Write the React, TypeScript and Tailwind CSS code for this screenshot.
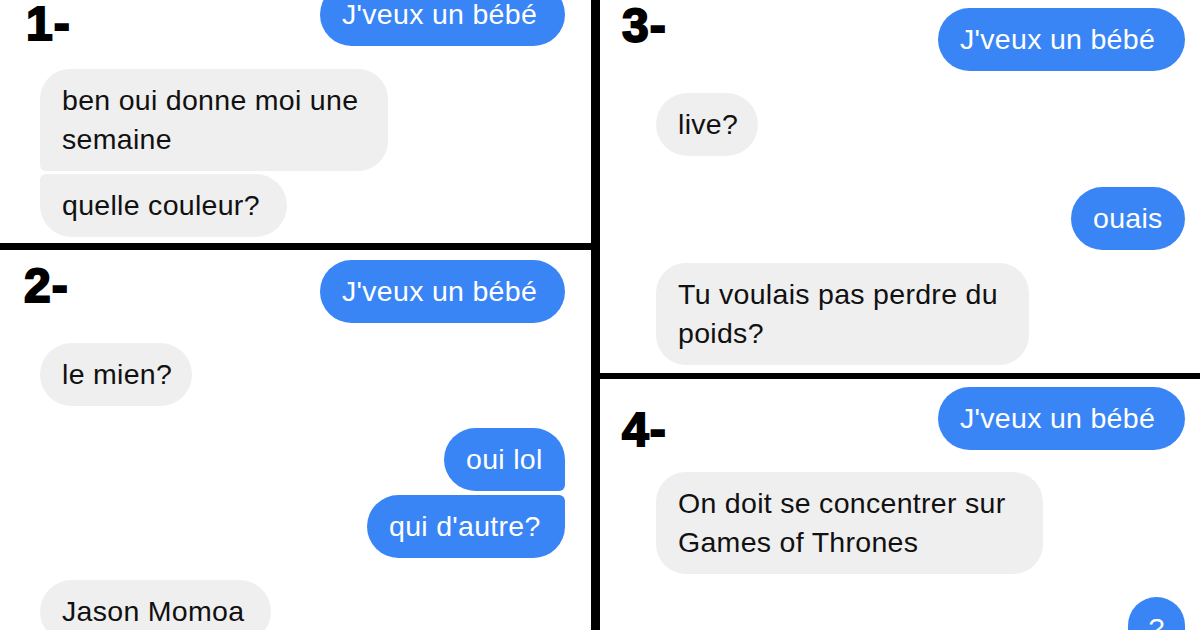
import type { ReactNode } from "react";

const font = { fontFamily: '"Liberation Sans", Arial, sans-serif' };

function Bubble({ children, className }: { children: ReactNode; className: string }) {
  return (
    <div
      className={`shrink-0 px-[22px] py-[12px] text-[28.5px] leading-[39px] tracking-[0.3px] whitespace-nowrap ${className}`}
    >
      {children}
    </div>
  );
}

function Label({ children, className }: { children: ReactNode; className: string }) {
  return (
    <div
      className={`text-[48px] font-bold leading-[36px] tracking-[1px] text-black [-webkit-text-stroke:2px_black] ${className}`}
    >
      {children}
    </div>
  );
}

// me = blue on the right, them = gray on the left
const me = "self-end bg-[#3a85f6] text-white";
const them = "self-start bg-[#efefef] text-[#111]";

export default function App() {
  return (
    <div className="flex h-[630px] w-[1200px] overflow-hidden bg-white" style={font}>
      {/* left column */}
      <div className="flex w-[591px] shrink-0 flex-col">
        {/* 1 */}
        <div className="flex h-[243px] shrink-0 flex-col overflow-hidden pl-[40px] pr-[26px]">
          <div className="flex items-start justify-between">
            <Label className="-ml-[14px] mt-[6px]">1-</Label>
            <Bubble className={`-mt-[17px] w-[245px] rounded-[32px] ${me}`}>J'veux un bébé</Bubble>
          </div>
          <Bubble className={`mt-[23px] w-[348px] rounded-t-[30px] rounded-br-[30px] rounded-bl-[6px] ${them}`}>
            ben oui donne moi une
            <br />
            semaine
          </Bubble>
          <Bubble className={`mt-[3px] w-[247px] rounded-[32px] rounded-tl-[6px] ${them}`}>quelle couleur?</Bubble>
        </div>
        <div className="h-[7px] shrink-0 bg-black" />
        {/* 2 */}
        <div className="flex flex-1 flex-col overflow-hidden pl-[40px] pr-[26px]">
          <div className="flex items-start justify-between">
            <Label className="-ml-[16px] mt-[18px]">2-</Label>
            <Bubble className={`mt-[10px] w-[245px] rounded-[32px] ${me}`}>J'veux un bébé</Bubble>
          </div>
          <Bubble className={`mt-[20px] w-[152px] rounded-[32px] ${them}`}>le mien?</Bubble>
          <Bubble className={`mt-[22px] w-[121px] rounded-[32px] rounded-br-[6px] ${me}`}>oui lol</Bubble>
          <Bubble className={`mt-[4px] w-[198px] rounded-[32px] rounded-tr-[6px] ${me}`}>qui d'autre?</Bubble>
          <Bubble className={`mt-[22px] w-[231px] rounded-[32px] ${them}`}>Jason Momoa</Bubble>
        </div>
      </div>

      <div className="w-[9px] shrink-0 bg-black" />

      {/* right column */}
      <div className="flex flex-1 flex-col">
        {/* 3 */}
        <div className="flex h-[373px] shrink-0 flex-col overflow-hidden pl-[56px] pr-[15px]">
          <div className="flex items-start justify-between">
            <Label className="-ml-[34px] mt-[8px]">3-</Label>
            <Bubble className={`mt-[8px] w-[247px] rounded-[32px] ${me}`}>J'veux un bébé</Bubble>
          </div>
          <Bubble className={`mt-[22px] w-[102px] rounded-[32px] ${them}`}>live?</Bubble>
          <Bubble className={`mt-[31px] w-[114px] rounded-[32px] ${me}`}>ouais</Bubble>
          <Bubble className={`mt-[13px] w-[373px] rounded-[30px] ${them}`}>
            Tu voulais pas perdre du
            <br />
            poids?
          </Bubble>
        </div>
        <div className="h-[6px] shrink-0 bg-black" />
        {/* 4 */}
        <div className="flex flex-1 flex-col overflow-hidden pl-[56px] pr-[15px]">
          <div className="flex items-start justify-between">
            <Label className="-ml-[34px] mt-[33px]">4-</Label>
            <Bubble className={`mt-[8px] w-[247px] rounded-[32px] ${me}`}>J'veux un bébé</Bubble>
          </div>
          <Bubble className={`mt-[22px] w-[387px] rounded-[30px] ${them}`}>
            On doit se concentrer sur
            <br />
            Games of Thrones
          </Bubble>
          <Bubble className={`mt-[23px] w-[57px] rounded-[32px] text-center !px-0 ${me}`}>?</Bubble>
        </div>
      </div>
    </div>
  );
}
